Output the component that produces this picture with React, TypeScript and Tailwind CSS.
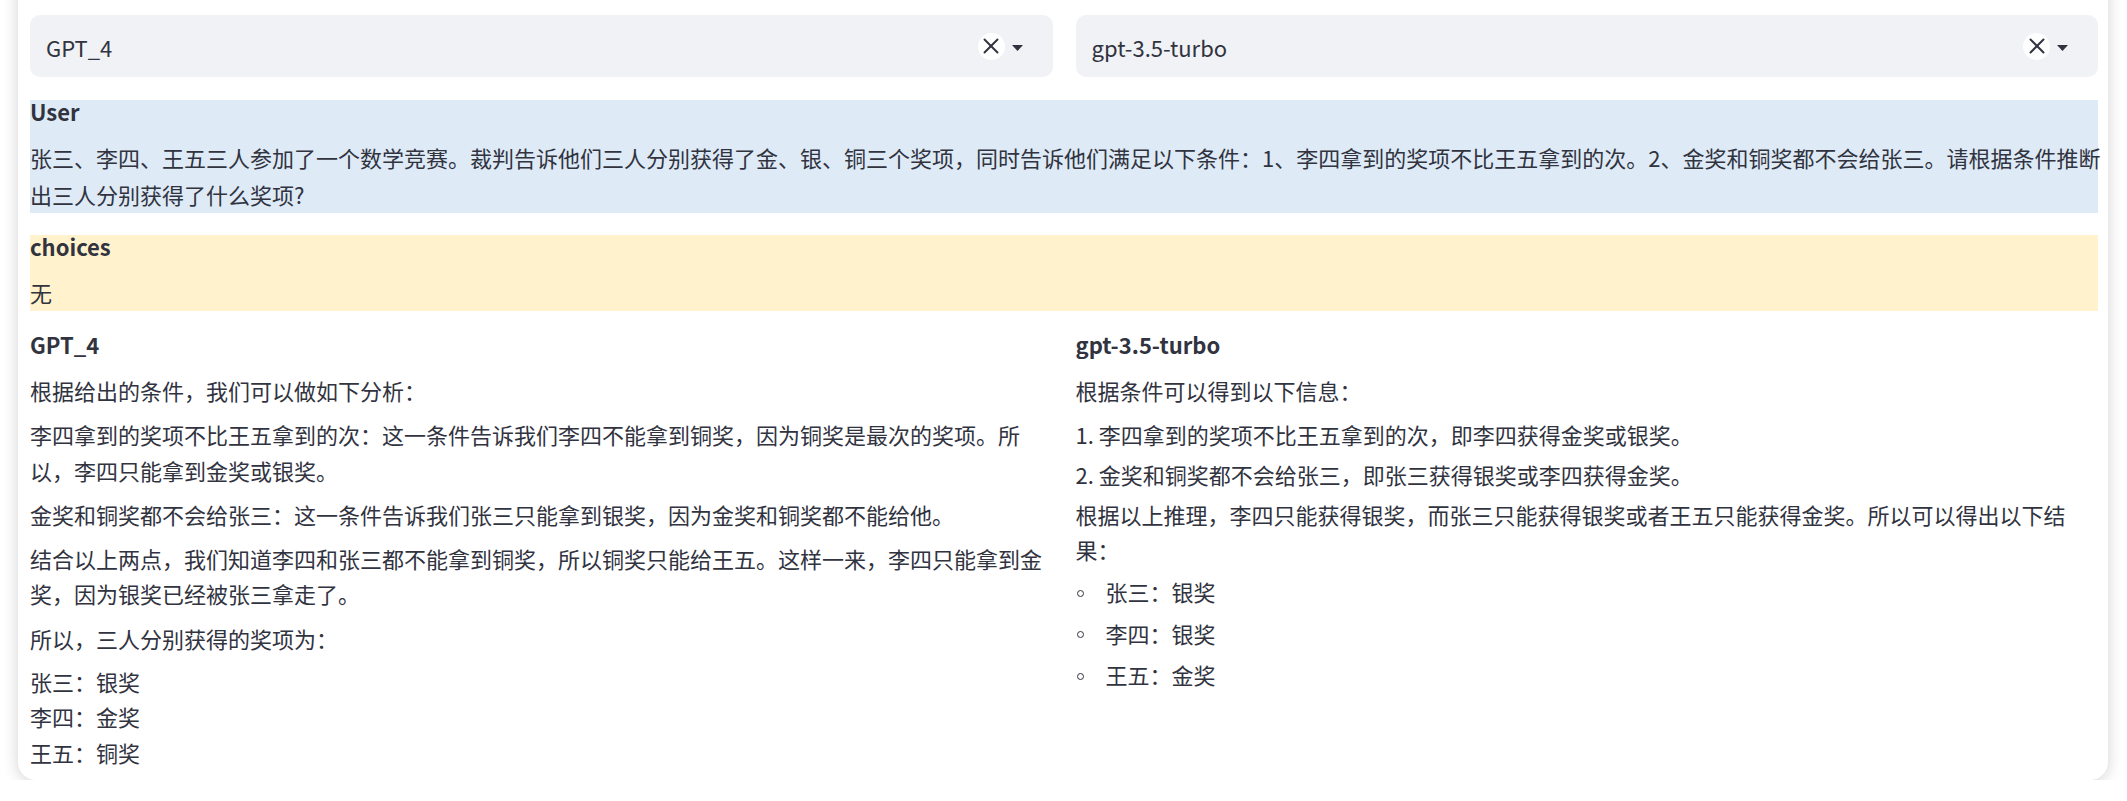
import { X } from "lucide-react";

function ModelSelect({ value }: { value: string }) {
  return (
    <div className="flex h-[62px] items-center rounded-[10px] bg-[#f0f2f6] pl-4 pr-[30px]">
      <span className="flex-1 pt-[3px]">{value}</span>
      <span className="flex h-[27px] w-[27px] items-center justify-center rounded-full bg-white">
        <X size={26} strokeWidth={1.8} color="#31333f" />
      </span>
      <svg className="ml-[7px] mt-[3px]" width="11" height="6" viewBox="0 0 11 6">
        <path d="M0 0h11L5.5 6z" fill="#31333f" />
      </svg>
    </div>
  );
}

function Bullet({ children }: { children: React.ReactNode }) {
  return (
    <li className="flex items-center">
      <span className="ml-[1px] mt-[3px] h-[7px] w-[7px] rounded-full border-[1.3px] border-[#31333f]" />
      <span className="ml-[22px]">{children}</span>
    </li>
  );
}

export default function App() {
  return (
    <div className="min-h-screen bg-white font-['Noto_Sans_CJK_SC',sans-serif] text-[22px] text-[#31333f]">
      <div className="-mt-[30px] ml-[18px] mr-[19px] rounded-[18px] bg-white pb-[10px] pl-[12px] pr-[10px] pt-[45px] shadow-[0_2px_16px_rgba(0,0,0,0.18)]">
        <div className="grid grid-cols-2 gap-x-[23px]">
          <ModelSelect value="GPT_4" />
          <ModelSelect value="gpt-3.5-turbo" />
        </div>

        <div className="mt-[23px] bg-[#deebf7]">
          <div className="font-semibold leading-[23px]">User</div>
          <p className="mt-4 leading-[37px]">
            <span className="block whitespace-nowrap">
              张三、李四、王五三人参加了一个数学竞赛。裁判告诉他们三人分别获得了金、银、铜三个奖项，同时告诉他们满足以下条件：1、李四拿到的奖项不比王五拿到的次。2、金奖和铜奖都不会给张三。请根据条件推断
            </span>
            <span className="block">出三人分别获得了什么奖项?</span>
          </p>
        </div>

        <div className="mt-[22px] bg-[#fff2cc]">
          <div className="font-semibold leading-[23px]">choices</div>
          <p className="mt-4 leading-[37px]">无</p>
        </div>

        <div className="mt-[22px] grid grid-cols-2 gap-x-[23px] leading-[35.3px]">
          <div>
            <div className="font-semibold leading-[23px]">GPT_4</div>
            <p className="mt-[17px]">根据给出的条件，我们可以做如下分析：</p>
            <p className="mt-[9px]">
              李四拿到的奖项不比王五拿到的次：这一条件告诉我们李四不能拿到铜奖，因为铜奖是最次的奖项。所以，李四只能拿到金奖或银奖。
            </p>
            <p className="mt-[9px]">
              金奖和铜奖都不会给张三：这一条件告诉我们张三只能拿到银奖，因为金奖和铜奖都不能给他。
            </p>
            <p className="mt-[9px]">
              结合以上两点，我们知道李四和张三都不能拿到铜奖，所以铜奖只能给王五。这样一来，李四只能拿到金奖，因为银奖已经被张三拿走了。
            </p>
            <p className="mt-[9px]">所以，三人分别获得的奖项为：</p>
            <p className="mt-[8px]">
              张三：银奖
              <br />
              李四：金奖
              <br />
              王五：铜奖
            </p>
          </div>

          <div>
            <div className="font-semibold leading-[23px]">gpt-3.5-turbo</div>
            <p className="mt-[17px]">根据条件可以得到以下信息：</p>
            <p className="mt-[9px]">1. 李四拿到的奖项不比王五拿到的次，即李四获得金奖或银奖。</p>
            <p className="mt-[4px]">2. 金奖和铜奖都不会给张三，即张三获得银奖或李四获得金奖。</p>
            <p className="mt-[5px]">
              根据以上推理，李四只能获得银奖，而张三只能获得银奖或者王五只能获得金奖。所以可以得出以下结果：
            </p>
            <ul className="mt-[7px] space-y-[6px]">
              <Bullet>张三：银奖</Bullet>
              <Bullet>李四：银奖</Bullet>
              <Bullet>王五：金奖</Bullet>
            </ul>
          </div>
        </div>
      </div>
    </div>
  );
}
